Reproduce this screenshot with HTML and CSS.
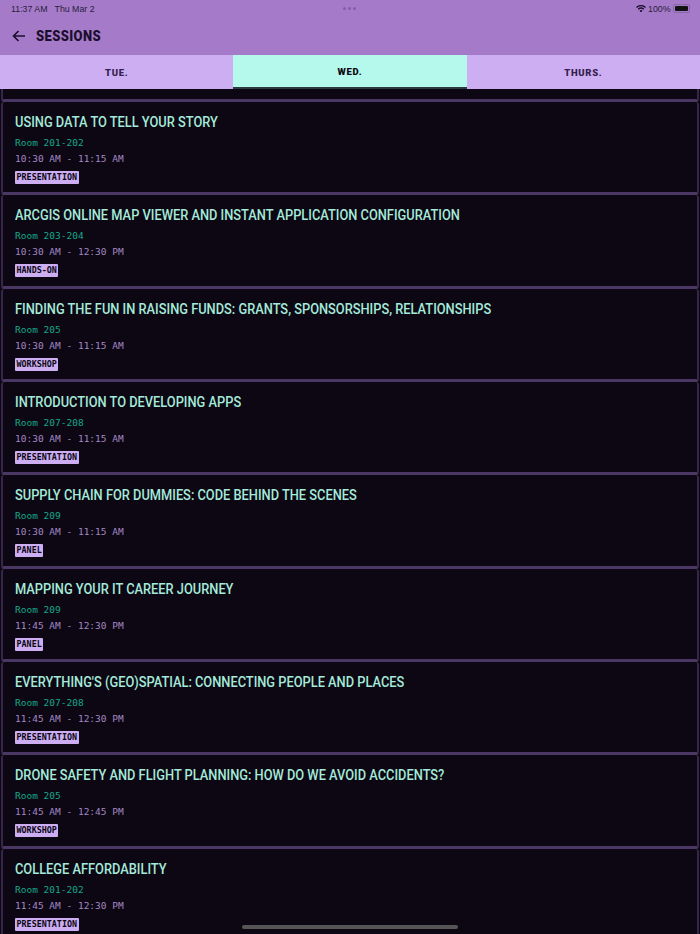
FILE: index.html
```html
<html>
<head>
  <meta charset="utf-8">
  <title>Sessions</title>
  <link rel="stylesheet" href="styles.css">
</head>
<body>
  <div class="app">
    <header class="top">
      <div class="status">
        <span class="clock">11:37 AM</span>
        <span>Thu Mar 2</span>
        <div class="dots"><i></i><i></i><i></i></div>
        <div class="status-right">
          <svg class="wifi" width="10" height="7.500" viewBox="0 0 12 9"><path d="M6 9 4.200 6.900a2.700 2.700 0 0 1 3.600 0zM3.200 5.800 2.100 4.600a5.800 5.800 0 0 1 7.800 0L8.800 5.800a4.200 4.200 0 0 0-5.600 0zM1.100 3.500 0 2.300a8.900 8.900 0 0 1 12 0l-1.100 1.200a7.300 7.300 0 0 0-9.800 0z"/></svg>
          <span>100%</span>
          <div class="battery"><div class="battery-fill"></div></div>
        </div>
      </div>
      <div class="title-bar">
        <svg class="back" width="14" height="12" viewBox="0 0 14 12"><path d="M13 6H1.500M6.500 1 1.500 6l5 5" fill="none" stroke="#1c0f2e" stroke-width="1.600"/></svg>
        <h1>SESSIONS</h1>
      </div>
    </header>
    <nav class="tabs">
      <div class="tab">TUE.</div>
      <div class="tab active">WED.</div>
      <div class="tab">THURS.</div>
    </nav>
    <main class="list">
      <div class="card-end"></div>
      <section class="card">
        <h2>USING DATA TO TELL YOUR STORY</h2>
        <p class="room">Room 201-202</p>
        <p class="time">10:30 AM - 11:15 AM</p>
        <span class="tag">PRESENTATION</span>
      </section>
      <section class="card">
        <h2>ARCGIS ONLINE MAP VIEWER AND INSTANT APPLICATION CONFIGURATION</h2>
        <p class="room">Room 203-204</p>
        <p class="time">10:30 AM - 12:30 PM</p>
        <span class="tag">HANDS-ON</span>
      </section>
      <section class="card">
        <h2>FINDING THE FUN IN RAISING FUNDS: GRANTS, SPONSORSHIPS, RELATIONSHIPS</h2>
        <p class="room">Room 205</p>
        <p class="time">10:30 AM - 11:15 AM</p>
        <span class="tag">WORKSHOP</span>
      </section>
      <section class="card">
        <h2>INTRODUCTION TO DEVELOPING APPS</h2>
        <p class="room">Room 207-208</p>
        <p class="time">10:30 AM - 11:15 AM</p>
        <span class="tag">PRESENTATION</span>
      </section>
      <section class="card">
        <h2>SUPPLY CHAIN FOR DUMMIES: CODE BEHIND THE SCENES</h2>
        <p class="room">Room 209</p>
        <p class="time">10:30 AM - 11:15 AM</p>
        <span class="tag">PANEL</span>
      </section>
      <section class="card">
        <h2>MAPPING YOUR IT CAREER JOURNEY</h2>
        <p class="room">Room 209</p>
        <p class="time">11:45 AM - 12:30 PM</p>
        <span class="tag">PANEL</span>
      </section>
      <section class="card">
        <h2>EVERYTHING'S (GEO)SPATIAL: CONNECTING PEOPLE AND PLACES</h2>
        <p class="room">Room 207-208</p>
        <p class="time">11:45 AM - 12:30 PM</p>
        <span class="tag">PRESENTATION</span>
      </section>
      <section class="card">
        <h2>DRONE SAFETY AND FLIGHT PLANNING: HOW DO WE AVOID ACCIDENTS?</h2>
        <p class="room">Room 205</p>
        <p class="time">11:45 AM - 12:45 PM</p>
        <span class="tag">WORKSHOP</span>
      </section>
      <section class="card">
        <h2>COLLEGE AFFORDABILITY</h2>
        <p class="room">Room 201-202</p>
        <p class="time">11:45 AM - 12:30 PM</p>
        <span class="tag">PRESENTATION</span>
      </section>
    </main>
    <div class="home-bar"></div>
  </div>
</body>
</html>
```

FILE: styles.css
```css
body {
  margin: 0;
  background: #0c0712;
  font-family: "Roboto", sans-serif;
}
.app {
  position: relative;
  width: 700px;
  height: 934px;
  overflow: hidden;
  display: flex;
  flex-direction: column;
}
.top {
  background: #a57bc9;
  color: #1c0f2e;
  height: 55px;
  flex: none;
}
.status {
  position: relative;
  display: flex;
  align-items: center;
  gap: 7px;
  height: 17px;
  padding: 0 10px 0 11px;
  font-family: "Liberation Sans", sans-serif;
  font-size: 8.8px;
  color: #2a1c3c;
}
.dots {
  position: absolute;
  left: 343px;
  top: 7px;
  display: flex;
  gap: 2px;
}
.dots i {
  width: 3px;
  height: 3px;
  border-radius: 50%;
  background: #8460a6;
}
.status-right {
  margin-left: auto;
  display: flex;
  align-items: center;
  gap: 2.500px;
}
.wifi {
  fill: #1c0f2e;
}
.battery {
  width: 17px;
  height: 9px;
  padding: 1px;
  border: 1px solid #8a68a8;
  border-radius: 2px;
  box-sizing: border-box;
}
.battery-fill {
  height: 100%;
  background: #111;
  border-radius: 1px;
}
.title-bar {
  display: flex;
  align-items: center;
  gap: 10px;
  height: 38px;
  padding-left: 12px;
}
h1 {
  margin: 0;
  font-size: 14px;
  font-weight: 900;
  letter-spacing: 0.4px;
  transform: scaleX(0.93);
  transform-origin: left;
}
.tabs {
  display: flex;
  height: 34px;
  flex: none;
  background: #cdaef3;
}
.tab {
  flex: 1;
  display: flex;
  align-items: center;
  justify-content: center;
  font-size: 9.500px;
  font-weight: 900;
  letter-spacing: 0.7px;
  color: #35214f;
}
.tab.active {
  background: #b4f9eb;
  color: #0c0712;
  border-bottom: 2px solid #2c3a44;
  box-sizing: border-box;
}
.list {
  display: flex;
  flex-direction: column;
  flex: none;
}
.card-end {
  height: 13px;
  border-bottom: 3px solid #4b3763;
  box-sizing: border-box;
  margin: 0 1px;
  border-left: 2px solid #35264a;
  border-right: 2px solid #35264a;
  border-radius: 0 0 3px 3px;
}
.card {
  height: 93.33px;
  box-sizing: border-box;
  flex: none;
  padding: 11px 12px 0;
  margin: 0 1px;
  border: 2px solid #35264a;
  border-bottom: 3px solid #4b3763;
  border-top: 0;
  border-radius: 3px;
}
h2 {
  margin: 0;
  font-size: 15px;
  line-height: 18px;
  font-weight: 500;
  color: #a5eadb;
  white-space: nowrap;
  transform: scaleX(0.855);
  transform-origin: left;
}
.room, .time {
  margin: 0;
  font-family: "DejaVu Sans Mono", monospace;
  font-size: 9.500px;
  line-height: 16px;
}
.room {
  margin-top: 4px;
  color: #14a88c;
}
.time {
  color: #a488c6;
}
.tag {
  display: inline-block;
  margin-top: 4px;
  padding: 0 1.500px;
  background: #cdaef3;
  color: #0c0712;
  font-family: "DejaVu Sans Mono", monospace;
  font-size: 8.400px;
  font-weight: 700;
  line-height: 13px;
  border-radius: 1px;
}
.home-bar {
  position: absolute;
  left: 242px;
  bottom: 5px;
  width: 216px;
  height: 4px;
  border-radius: 2px;
  background: #555;
}
```
